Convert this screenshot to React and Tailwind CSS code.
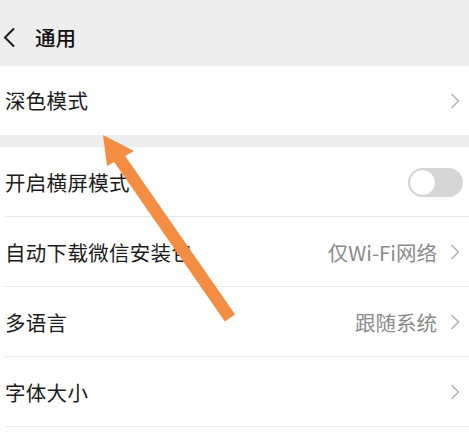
import React from 'react';

const font = { fontFamily: '"Noto Sans CJK SC", "Noto Sans", sans-serif' };

const Chevron = () => (
  <svg width="10" height="18" viewBox="0 0 10 18" className="shrink-0">
    <path d="M1.5 2 L8.5 9 L1.5 16" fill="none" stroke="#b3b3b3" strokeWidth="1.6" />
  </svg>
);

const Row = ({ label, value, right, last }) => (
  <div className="h-[70px] flex items-center pl-[5px] pr-[9px] relative">
    <span className="flex-1 text-[20.5px] text-[#1b1b1b] tracking-[0.3px]">{label}</span>
    {value && <span className="text-[20.5px] text-[#8a8a8a] mr-[13px]">{value}</span>}
    {right}
    {!last && <div className="absolute left-[5px] right-0 bottom-0 h-px bg-[#e8e8e8]" />}
  </div>
);

const Toggle = () => (
  <div className="w-[55px] h-[29px] rounded-full bg-[#d6d6d6] p-px mr-[-3px]">
    <div className="w-[27px] h-[27px] rounded-full bg-white border border-[#cfcfcf]" />
  </div>
);

export default function App() {
  return (
    <div className="w-[469px] h-[434px] bg-white relative overflow-hidden" style={font}>
      <div className="h-[66px] bg-[#ededed] flex items-center pl-[3px] pt-[9px]">
        <svg width="13" height="21" viewBox="0 0 13 21">
          <path d="M11 1.5 L2 10.5 L11 19.5" fill="none" stroke="#1a1a1a" strokeWidth="2" />
        </svg>
        <span className="ml-[19px] text-[20.5px] font-medium text-[#111]">通用</span>
      </div>

      <div className="h-[69px] flex items-center pl-[5px] pr-[9px]">
        <span className="flex-1 text-[20.5px] text-[#1b1b1b] tracking-[0.3px]">深色模式</span>
        <Chevron />
      </div>
      <div className="h-[12px] bg-[#ededed]" />

      <Row label="开启横屏模式" right={<Toggle />} />
      <Row label="自动下载微信安装包" value="仅Wi-Fi网络" right={<Chevron />} />
      <Row label="多语言" value="跟随系统" right={<Chevron />} />
      <Row label="字体大小" right={<Chevron />} />

      <svg className="absolute left-0 top-0 pointer-events-none" width="469" height="434">
        <line x1="119" y1="158" x2="230" y2="318" stroke="#f28d43" strokeWidth="12.5" />
        <polygon points="103,135 134,151 107,166" fill="#f28d43" />
      </svg>
    </div>
  );
}
